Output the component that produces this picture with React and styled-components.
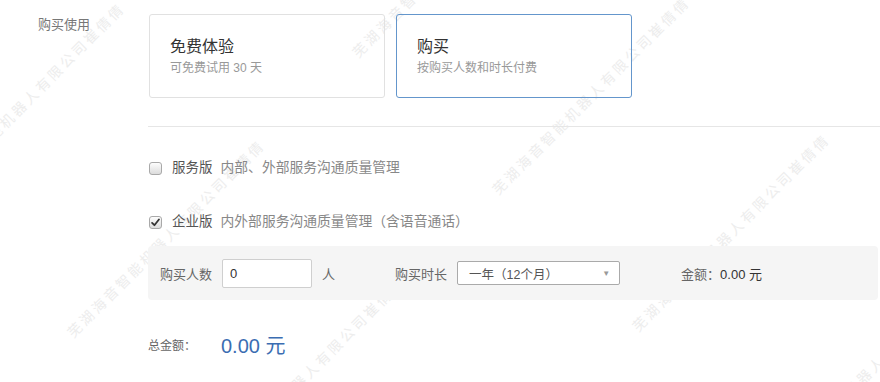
import styled, { createGlobalStyle } from 'styled-components';

const GlobalStyle = createGlobalStyle`
  html, body {
    margin: 0;
    padding: 0;
    background: #fff;
  }
  body {
    font-family: "Liberation Sans", "Noto Sans CJK SC", sans-serif;
    color: #333;
  }
`;

const WATERMARK = '芜湖海音智能机器人有限公司崔倩倩';

// lattice of watermark start points (bottom-left of the first glyph)
const MARKS = [
  [360, 60], [75, 340], [500, 197], [215, 477],
  [-65, 203], [640, 334], [780, 471],
];

const Page = styled.div`
  position: relative;
  width: 880px;
  height: 382px;
  overflow: hidden;
`;

const WatermarkLayer = styled.div`
  position: absolute;
  inset: 0;
  pointer-events: none;
  z-index: 0;
`;

const Mark = styled.span`
  position: absolute;
  left: ${({ $x }) => $x}px;
  top: ${({ $y }) => $y - 14}px;
  font-size: 14px;
  line-height: 14px;
  letter-spacing: 3px;
  white-space: nowrap;
  color: #ededed;
  transform-origin: 0 100%;
  transform: rotate(-45deg);
  user-select: none;
`;

const Content = styled.div`
  position: relative;
  z-index: 1;
  display: grid;
  grid-template-columns: 110px 1fr;
  padding: 14px 0 0 38px;
`;

const SideLabel = styled.div`
  font-size: 13px;
  line-height: 20px;
  padding-top: 1px;
  color: #777;
`;

const Main = styled.div`
  display: flex;
  flex-direction: column;
`;

const Cards = styled.div`
  display: flex;
  gap: 11px;
  margin-left: 1px;
`;

const Card = styled.div`
  box-sizing: border-box;
  width: 236px;
  height: 84px;
  padding: 20px 20px 0;
  border: 1px solid ${({ $active }) => ($active ? '#6496cc' : '#e1e1e1')};
  border-radius: 3px;
  cursor: pointer;
`;

const CardTitle = styled.div`
  font-size: 16px;
  line-height: 23px;
  color: #333;
`;

const CardSub = styled.div`
  margin-top: 2px;
  font-size: 12px;
  line-height: 16px;
  color: #999;
`;

const Divider = styled.div`
  height: 1px;
  margin-top: 28px;
  background: #e6e6e6;
`;

const CheckRow = styled.label`
  display: flex;
  align-items: center;
  height: 20px;
  margin-top: ${({ $top }) => $top}px;
  margin-left: 1px;
  font-size: 13.5px;
  line-height: 20px;
`;

const Box = styled.span`
  box-sizing: border-box;
  display: inline-flex;
  align-items: center;
  justify-content: center;
  width: 13px;
  height: 13px;
  margin-right: 10px;
  border: 1px solid #a9a9a9;
  border-radius: 3px;
  background: linear-gradient(#fdfdfd, #dcdcdc);
`;

const Edition = styled.span`
  color: #555;
`;

const EditionDesc = styled.span`
  margin-left: 8px;
  font-size: 13.8px;
  color: #888;
`;

const Panel = styled.div`
  display: flex;
  align-items: center;
  height: 54px;
  margin: 14px 2px 0 0;
  padding: 0 12px;
  background: #f5f5f5;
  border-radius: 4px;
  font-size: 13px;
  color: #666;
`;

const Field = styled.div`
  display: flex;
  align-items: center;
  gap: 10px;
  margin-left: ${({ $gap }) => $gap || 0}px;
`;

const NumberInput = styled.input`
  box-sizing: border-box;
  width: 90px;
  height: 29px;
  padding: 0 7px;
  border: 1px solid #cfcfcf;
  border-radius: 2px;
  background: #fff;
  font-family: inherit;
  font-size: 13px;
  color: #333;
  outline: none;
`;

const Select = styled.div`
  box-sizing: border-box;
  display: flex;
  align-items: center;
  justify-content: space-between;
  width: 163px;
  height: 24px;
  padding: 0 9px 0 11px;
  border: 1px solid #aaa;
  border-radius: 2px;
  background: #fff;
  font-size: 12.5px;
  color: #555;
`;

const Caret = styled.span`
  font-size: 8px;
  color: #999;
`;

const Amount = styled.span`
  color: #333;
`;

const TotalRow = styled.div`
  display: flex;
  align-items: center;
  height: 26px;
  margin-top: 31px;
`;

const TotalLabel = styled.span`
  width: 73px;
  font-size: 12px;
  color: #666;
`;

const TotalValue = styled.span`
  font-size: 20px;
  color: #3b6db2;
`;

const Check = () => (
  <svg width="9" height="9" viewBox="0 0 10 10">
    <path d="M1.2 5.4 L3.8 8 L8.8 1.6" fill="none" stroke="#333" strokeWidth="2" strokeLinecap="round" strokeLinejoin="round" />
  </svg>
);

const App = () => (
  <>
    <GlobalStyle />
    <Page>
      <WatermarkLayer>
        {MARKS.map(([x, y]) => (
          <Mark key={`${x}-${y}`} $x={x} $y={y}>{WATERMARK}</Mark>
        ))}
      </WatermarkLayer>
      <Content>
        <SideLabel>购买使用</SideLabel>
        <Main>
          <Cards>
            <Card>
              <CardTitle>免费体验</CardTitle>
              <CardSub>可免费试用 30 天</CardSub>
            </Card>
            <Card $active>
              <CardTitle>购买</CardTitle>
              <CardSub>按购买人数和时长付费</CardSub>
            </Card>
          </Cards>
          <Divider />
          <CheckRow $top={31}>
            <Box />
            <Edition>服务版</Edition>
            <EditionDesc>内部、外部服务沟通质量管理</EditionDesc>
          </CheckRow>
          <CheckRow $top={34}>
            <Box><Check /></Box>
            <Edition>企业版</Edition>
            <EditionDesc>内外部服务沟通质量管理（含语音通话）</EditionDesc>
          </CheckRow>
          <Panel>
            <Field>
              <span>购买人数</span>
              <NumberInput defaultValue="0" />
              <span>人</span>
            </Field>
            <Field $gap={60}>
              <span>购买时长</span>
              <Select>
                <span>一年（12个月）</span>
                <Caret>▼</Caret>
              </Select>
            </Field>
            <Field $gap={61}>
              <span>金额：<Amount>0.00 元</Amount></span>
            </Field>
          </Panel>
          <TotalRow>
            <TotalLabel>总金额：</TotalLabel>
            <TotalValue>0.00 元</TotalValue>
          </TotalRow>
        </Main>
      </Content>
    </Page>
  </>
);

export default App;
